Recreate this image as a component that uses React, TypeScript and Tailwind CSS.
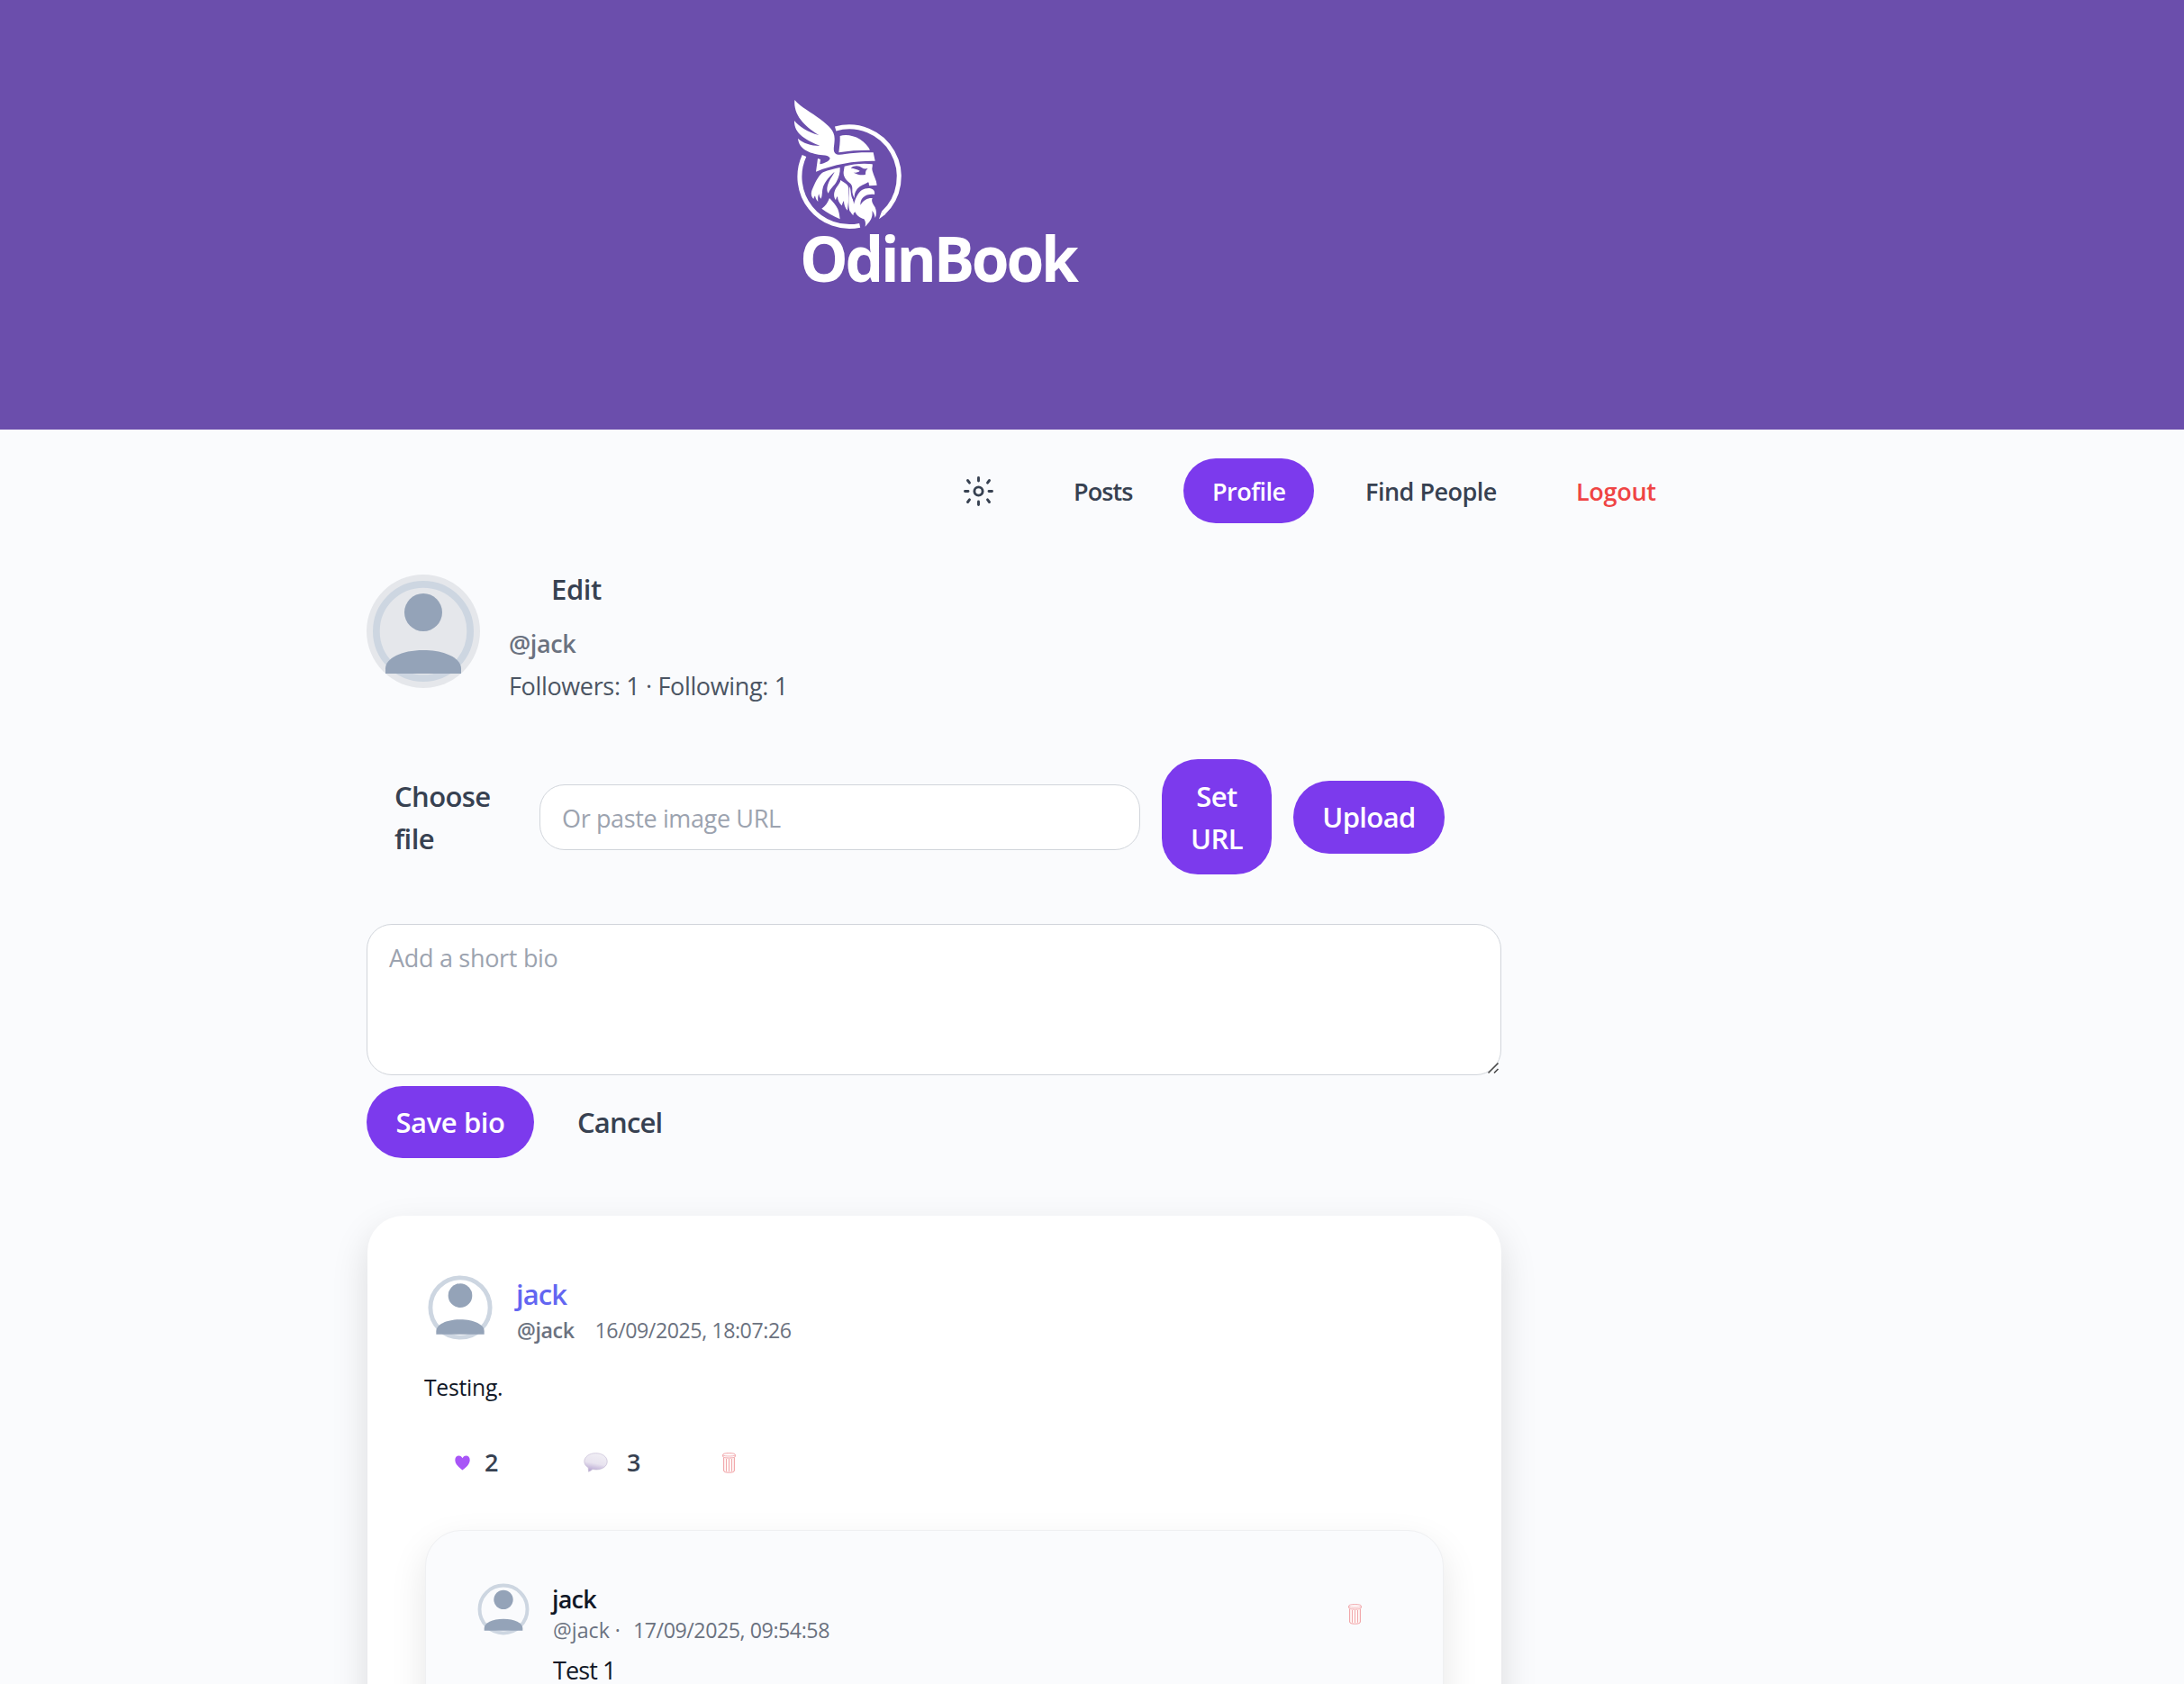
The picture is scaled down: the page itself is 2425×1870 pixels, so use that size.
import type { ReactNode } from "react";

const BRAND = "#6b4eac";

function Logo() {
  return (
    <svg className="h-[250px] w-[360px]" viewBox="0 0 1080 750" fill="#fff" aria-label="OdinBook">
      <g fill="none" stroke="#fff" strokeWidth="15">
        <path d="M203 159 A166 166 0 0 1 362 440" />
        <path d="M284 481 A166 166 0 0 1 99 249" />
      </g>
      <path d="M357 434 L368 445 L348 460Z" />
      {/* wing and helmet band */}
      <path d="M67 63 C85 85 125 106 152 127 C182 150 200 166 200 192 C200 212 195 226 199 236 C204 247 218 247 235 243 C265 238 300 237 329 238 L335 266 C270 265 200 276 138 302 L144 258 L153 261 L151 277 C165 274 182 268 185 257 C180 249 172 248 160 247 C125 242 82 232 78 191 C95 207 120 215 151 216 C110 198 64 178 66 132 C82 152 110 170 148 180 C100 152 62 112 67 63Z" />
      {/* helmet dome */}
      <path d="M218 183 C235 177 262 180 285 194 C301 204 312 217 318 230 C280 230 245 232 214 238 C216 220 219 205 218 183Z" />
      {/* face */}
      <path d="M233 284 C262 276 298 273 326 277 C328 285 323 290 326 299 C330 315 340 330 341 347 L316 349 C313 345 316 340 312 337 C300 344 284 350 277 358 C270 367 266 374 266 390 C262 382 258 372 259 362 C260 349 255 343 247 337 C236 327 229 316 230 303Z" />
      <path fill={BRAND} d="M254 290 C265 280 282 281 291 289 C298 294 303 292 311 292 C304 296 303 302 303 311 C291 315 278 312 263 305 C273 305 281 303 284 299 C274 293 264 291 254 290Z" />
      {/* moustache and beard */}
      <path d="M291 363 C302 357 319 353 329 362 C334 367 334 373 333 378 C318 376 304 379 295 388 C288 395 286 403 286 413 C296 397 310 389 326 390 C321 401 329 411 335 421 C340 432 341 446 335 456 C333 445 330 437 325 432 C328 448 322 462 315 470 C309 476 306 481 302 485 C304 474 303 466 298 460 C285 457 273 447 268 436 C262 441 262 444 263 448 C253 440 248 428 250 414 L254 388 C262 396 264 402 264 410 C270 390 278 372 291 363Z" />
      <path d="M220 330 C231 337 240 342 245 350 C249 358 246 372 247 384 C248 394 244 414 243 431 C235 423 231 411 231 399 C227 404 226 409 224 415 C215 406 210 396 210 384 C206 388 205 392 204 397 C194 383 198 363 211 348 C216 341 219 336 220 330Z" />
      <path d="M250 352 C256 362 252 380 261 395 L252 436 C245 420 246 400 250 352Z" />
      {/* hair and collar */}
      <path d="M218 288 C219 305 214 322 206 336 C198 350 186 357 179 374 C173 366 174 352 181 336 C187 322 196 312 200 302 C185 315 168 335 162 352 C157 368 160 382 155 392 C150 388 149 382 148 376 C144 384 144 392 145 402 C138 395 136 388 135 382 C132 386 131 389 130 393 C121 384 120 373 127 358 C139 330 150 311 162 304 C180 296 200 292 218 288Z" />
      <path d="M183 390 C193 401 205 413 211 427 C216 439 216 449 218 460 C196 450 175 439 157 425 C170 416 178 404 183 390Z" />
      <text transform="translate(84 668) scale(.975 1)" fontFamily="Open Sans, Noto Sans, sans-serif" fontSize="208" fontWeight="700" letterSpacing="-10">
        OdinBook
      </text>
    </svg>
  );
}

function SunIcon() {
  return (
    <svg className="-ml-[2px] h-[33px] w-[33px]" viewBox="-16.5 -16.5 33 33" fill="none" stroke="#374151" strokeWidth="2.9" strokeLinecap="round">
      <circle r="4.6" />
      <path d="M0 -15V-11.500M0 15V11.500M-15 0H-11.500M15 0H11.500M-12 -12L-10 -9.400M12 -12L10 -9.400M-12 12L-10 9.400M12 12L10 9.400" />
    </svg>
  );
}

function Avatar({ className }: { className: string }) {
  return (
    <svg className={"shrink-0 " + className} viewBox="0 0 36 36">
      <circle cx="18" cy="18" r="14.9" fill="none" stroke="#cdd6e1" strokeWidth="2.2" />
      <circle cx="18" cy="12" r="6" fill="#94a3b8" />
      <path d="M6 31.4V29.8C6 26.6 11 24 18 24S30 26.6 30 29.8V31.4Z" fill="#94a3b8" />
    </svg>
  );
}

function Heart() {
  return (
    <svg className="h-[17px] w-[17px]" viewBox="0 0 17 17" fill="#a855f7">
      <path d="M8.500 16.600C5.500 14 .3 10.500 .3 5.300C.3 2.300 2 .4 4.500 .4C6.400 .4 7.800 1.500 8.500 3.200C9.200 1.500 10.600 .4 12.500 .4C15 .4 16.700 2.300 16.700 5.300C16.700 10.500 11.500 14 8.500 16.600Z" />
    </svg>
  );
}

function Bubble() {
  return (
    <svg className="h-[22px] w-[27px]" viewBox="0 0 27 22">
      <defs>
        <linearGradient id="bubble" x1=".6" y1="0" x2=".35" y2="1">
          <stop offset="0" stopColor="#f1eff5" />
          <stop offset=".55" stopColor="#e8e3ef" />
          <stop offset="1" stopColor="#b3a1cf" />
        </linearGradient>
      </defs>
      <path d="M13.500 .7C20.600 .7 26.200 4.600 26.200 10S20.600 18.900 14 18.900C12.500 18.900 11.300 18.700 10 18.500C8.700 19.600 7.500 20.400 5.600 21.200C5.300 19.800 5.300 18.200 5.200 16.700C2.400 15 .8 12.700 .8 10C.8 4.600 6.400 .7 13.500 .7Z" fill="url(#bubble)" stroke="#c6bdd6" strokeWidth=".7" />
    </svg>
  );
}

function Trash() {
  return (
    <svg className="h-[23px] w-[15px]" viewBox="0 0 15 23" fill="none" stroke="#ee9499" strokeWidth=".9">
      <path fill="#fff7f6" d="M1.600 5.500V20C1.600 21.500 4 22.200 7.500 22.200S13.400 21.500 13.400 20V5.500" />
      <path d="M4.500 7V20.800M7.500 7V21M10.500 7V20.800" strokeWidth=".8" />
      <path fill="#fff" d="M.7 2.300C.7 1.200 3.500 .7 7.500 .7S14.300 1.200 14.300 2.300V4.200C14.300 5.400 11.500 6 7.500 6S.7 5.400 .7 4.200Z" />
      <path d="M.9 3C2.500 4.300 12.500 4.300 14.100 3" strokeWidth=".7" />
    </svg>
  );
}

function NavItem({ className, children }: { className: string; children: ReactNode }) {
  return (
    <a className={"flex h-[72px] items-center rounded-full pt-[2px] text-[27px] font-semibold whitespace-nowrap " + className}>{children}</a>
  );
}

export default function App() {
  return (
    <div className="h-[1870px] w-full overflow-hidden bg-[#fafbfd] font-['Open_Sans','Noto_Sans',sans-serif] text-[#111827]">
      <header className="h-[477px] bg-[#6b4eac] pt-[90px] pl-[860px]">
        <Logo />
      </header>

      <nav className="flex gap-6 pt-8 pl-[1038px] text-[#374151]">
        <button className="flex h-[72px] w-[98px] items-center justify-center">
          <SunIcon />
        </button>
        <NavItem className="w-[130px] pl-8 tracking-[-0.9px]">Posts</NavItem>
        <NavItem className="w-[145px] bg-[#7c3aed] pl-8 tracking-[-0.5px] text-white">Profile</NavItem>
        <NavItem className="w-[212px] pl-[33px] tracking-[-0.5px]">Find People</NavItem>
        <NavItem className="w-[153px] pl-[31px] tracking-[-0.3px] text-[#ef4444]">Logout</NavItem>
      </nav>

      <main className="ml-[407px] w-[1260px]">
        <section className="mt-[49px] flex h-[155px] items-start">
          <div className="mt-2 h-[126px] w-[126px] rounded-full bg-[#e5e7eb]">
            <Avatar className="h-[126px] w-[126px]" />
          </div>
          <div className="ml-8">
            <button className="ml-[47px] block text-[31px] leading-[48px] font-semibold tracking-[-0.4px] text-[#374151]">Edit</button>
            <p className="mt-[13px] text-[27px] leading-[47px] font-semibold tracking-[-0.4px] text-[#6b7280]">@jack</p>
            <p className="text-[27px] leading-[47px] tracking-[-0.35px] text-[#4b5563]">Followers: 1 · Following: 1</p>
          </div>
        </section>

        <form className="mt-[58px] flex h-[128px] items-center gap-6">
          <label className="w-[168px] pt-[2px] pr-12 pl-[31px] text-[31px] leading-[47px] font-semibold tracking-[-0.6px] text-[#374151]">
            Choose file
          </label>
          <input
            className="h-[73px] w-[667px] rounded-[28px] border border-[#d1d5db] bg-white px-6 pt-[2px] text-[27px] tracking-[-0.37px] placeholder:text-[#9ca3af]"
            placeholder="Or paste image URL"
          />
          <button type="button" className="h-[128px] w-[122px] rounded-[40px] bg-[#7c3aed] px-6 pt-[2px] text-[31px] leading-[47px] font-semibold tracking-[-0.5px] text-white">
            Set URL
          </button>
          <button type="button" className="h-[81px] w-[168px] rounded-[40px] bg-[#7c3aed] pt-px text-[31px] font-semibold tracking-[-0.6px] text-white">
            Upload
          </button>
        </form>

        <div className="relative mt-[55px] h-[168px]">
          <textarea
            className="block h-[168px] w-[1260px] resize-none rounded-[28px] border border-[#d1d5db] bg-white px-6 pt-[18px] text-[27px] leading-[38px] tracking-[-0.3px] placeholder:text-[#9ca3af]"
            placeholder="Add a short bio"
          />
          <svg className="absolute right-[2px] bottom-[1px] h-[14px] w-[14px]" viewBox="0 0 14 14" stroke="#4a4a4a" strokeWidth="1.600">
            <path d="M1.500 12.500L12.500 1.500M8 12.500L12.500 8" />
          </svg>
        </div>

        <div className="mt-3 flex gap-4 text-[31px] font-semibold">
          <button className="h-20 w-[186px] rounded-full bg-[#7c3aed] tracking-[-0.4px] text-white">Save bio</button>
          <button className="h-20 px-8 tracking-[-0.8px] text-[#374151]">Cancel</button>
        </div>

        <article className="mt-16 ml-px h-[700px] w-[1259px] rounded-[40px] bg-white pt-[62px] pr-[64px] pl-[64px] shadow-[0_16px_40px_rgba(0,0,0,0.13)]">
          <div className="-ml-px flex">
            <Avatar className="h-20 w-20" />
            <div className="ml-[23px]">
              <p className="-ml-px pt-px text-[31px] leading-[48px] font-semibold tracking-[-0.9px] text-[#6366f1]">jack</p>
              <p className="flex gap-[23px] text-[23.2px] leading-[32px] text-[#6b7280]">
                <span className="font-semibold tracking-[-0.4px]">@jack</span>
                <span className="tracking-[-0.44px]">16/09/2025, 18:07:26</span>
              </p>
            </div>
          </div>
          <p className="mt-[28px] -ml-px text-[24.7px] leading-[40px] tracking-[-0.25px]">Testing.</p>
          <div className="mt-[43px] flex h-10 items-center pl-[33px] text-[27px] font-semibold text-[#374151]">
            <Heart />
            <span className="ml-[16px] w-[110px]">2</span>
            <Bubble />
            <span className="ml-[21px] w-[106px]">3</span>
            <Trash />
          </div>

          <div className="mt-[55px] flex h-[400px] rounded-[40px] border border-[#eff0f2] bg-[#fafbfd] pt-[55px] pl-[54px] shadow-[0_16px_40px_rgba(0,0,0,0.1)]">
            <Avatar className="h-16 w-16" />
            <div className="ml-[23px] w-[883px]">
              <p className="-ml-px text-[27px] leading-[42px] font-semibold tracking-[-0.8px]">jack</p>
              <p className="-mt-px flex gap-[14px] text-[23.2px] leading-[28px] text-[#6b7280]">
                <span>@jack ·</span>
                <span className="tracking-[-0.44px]">17/09/2025, 09:54:58</span>
              </p>
              <p className="mt-2 text-[27px] leading-[46px] tracking-[-0.9px]">Test 1</p>
            </div>
            <button className="mt-[26px] h-[23px]">
              <Trash />
            </button>
          </div>
        </article>
      </main>
    </div>
  );
}
